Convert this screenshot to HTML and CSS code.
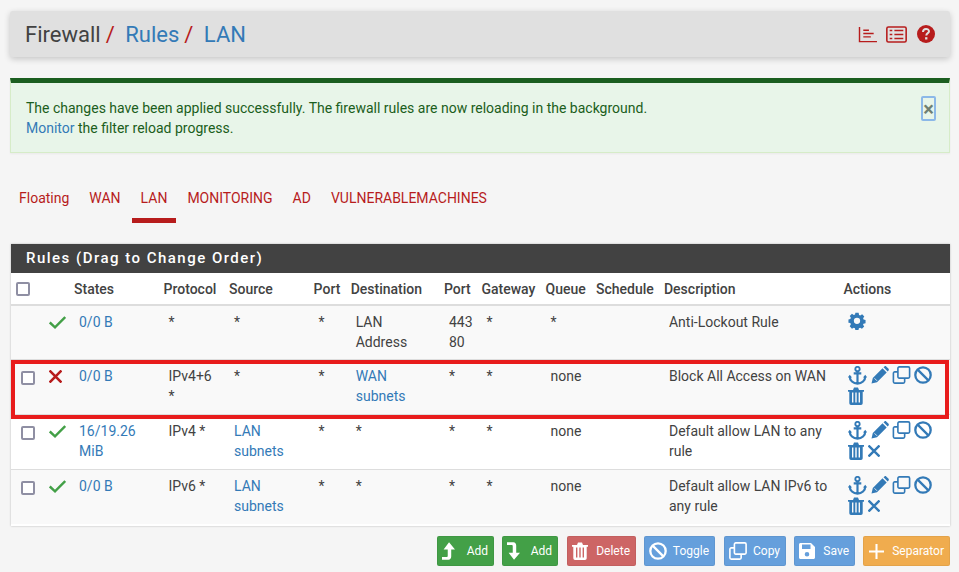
FILE: index.html
```html
<!DOCTYPE html>
<html lang="en">
<head>
  <meta charset="UTF-8">
  <title>Firewall: Rules: LAN</title>
  <link rel="stylesheet" href="styles.css">
</head>
<body>
<svg class="defs" width="0" height="0">
  <symbol id="i-check" viewBox="0 0 17 13"><path d="M.8 6.500 6 11.300 16.200 1" fill="none" stroke="currentColor" stroke-width="2.400"/></symbol>
  <symbol id="i-x" viewBox="1 1 12 12"><path d="M1.500 1.500 12.500 12.500M12.500 1.500 1.500 12.500" fill="none" stroke="currentColor" stroke-width="2.400"/></symbol>
  <symbol id="i-cog" viewBox="0 0 18 18"><path fill-rule="evenodd" fill="currentColor" d="M7.200.5h3.600l.5 2.400 1.300.6 2.100-1.300 2.400 2.500-1.300 2 .5 1.400 2.200.5v3.500l-2.300.5-.5 1.300 1.300 2-2.500 2.500-2-1.300-1.400.6-.5 2.200H7.200l-.5-2.300-1.300-.5-2 1.300L.9 15.400l1.300-2-.6-1.400L-.5 11.600V8l2.100-.5.600-1.400-1.300-2L3.400 1.600l2 1.300 1.400-.5zM9 6a3.500 3.500 0 1 0 0 7 3.500 3.500 0 0 0 0-7z" transform="translate(.9 .3) scale(.9)"/></symbol>
  <symbol id="i-anchor" viewBox="0 0 20 20"><circle cx="10" cy="3.200" r="2.300" fill="none" stroke="currentColor" stroke-width="2"/><path d="M6 7.800h8M10 5.400V18.500M1.800 10.800c0 4.500 3.600 7.700 8.200 7.700s8.200-3.200 8.200-7.700" fill="none" stroke="currentColor" stroke-width="2.300"/><path d="M0 12.200 1.800 9.200 4.300 12.200zM20 12.200 18.200 9.200 15.700 12.200z" fill="currentColor"/></symbol>
  <symbol id="i-pencil" viewBox="0 0 18 18"><path fill="currentColor" d="M.5 17.500 1.800 12 11.500 2.300l4.200 4.200L6 16.200zM12.500 1.300 13.500.4c.5-.4 1.200-.4 1.700 0l2.400 2.400c.4.500.4 1.200 0 1.700l-.9 1z"/><path d="M3.500 12.300 6 14.800" stroke="#fff" stroke-width=".8"/></symbol>
  <symbol id="i-clone" viewBox="0 0 20 20"><path fill="none" stroke="currentColor" stroke-width="1.800" d="M7.500 1h10c.8 0 1.500.7 1.500 1.500v9.500c0 .8-.7 1.500-1.500 1.500h-10C6.700 13.500 6 12.800 6 12V2.500C6 1.700 6.700 1 7.500 1z"/><path fill="none" stroke="currentColor" stroke-width="1.800" d="M6 6.500H2.500C1.700 6.500 1 7.200 1 8v9.500c0 .8.7 1.500 1.500 1.500h9.500c.8 0 1.500-.7 1.500-1.500V13.500"/></symbol>
  <symbol id="i-ban" viewBox="0 0 18 18"><circle cx="9" cy="9" r="7.700" fill="none" stroke="currentColor" stroke-width="2.300"/><path d="M3.600 3.600 14.400 14.400" stroke="currentColor" stroke-width="2.300"/></symbol>
  <symbol id="i-trash" viewBox="0 0 16 18"><path fill="currentColor" fill-rule="evenodd" d="M0 3h5l1-2.500h4L11 3h5v1.800h-1.300V16c0 1-.7 2-1.700 2H3c-1 0-1.700-1-1.700-2V4.800H0zM4 5.500v10h1.400v-10zM7.300 5.500v10h1.400v-10zM10.600 5.500v10H12v-10z"/></symbol>
  <symbol id="i-chart" viewBox="0 0 20 18"><path d="M1 1V16.500H19.500M5 4.500H11M5 8H16M5 11.500H13" fill="none" stroke="currentColor" stroke-width="1.500"/></symbol>
  <symbol id="i-list" viewBox="0 0 20 16"><rect x=".8" y=".8" width="18.400" height="14.400" rx="1.500" fill="none" stroke="currentColor" stroke-width="1.500"/><path d="M3.500 4.200H6M8 4.200H16.500M3.500 8H6M8 8H16.500M3.500 11.800H6M8 11.800H16.500" stroke="currentColor" stroke-width="1.600"/></symbol>
  <symbol id="i-help" viewBox="0 0 18 18"><circle cx="9" cy="9" r="9" fill="currentColor"/><path d="M6 7c0-4 6-4 6-.7C12 8.300 9.300 8 9.300 10.500" fill="none" stroke="#e0e0e0" stroke-width="2"/><rect x="8.100" y="12.200" width="2.300" height="2.300" fill="#e0e0e0"/></symbol>
  <symbol id="i-up" viewBox="0 0 12 16"><path fill="currentColor" d="M6.500 0 12 6.500H8.500V13c0 1.500-1 3-2.500 3H0v-2.500h4.500c.5 0 .8-.3.8-.8V6.500H1.500z"/></symbol>
  <symbol id="i-down" viewBox="0 0 12 16"><path fill="currentColor" d="M6.500 16 12 9.500H8.500V3C8.500 1.500 7.500 0 6 0H0v2.500h4.500c.5 0 .8.300.8.800v6.200H1.500z"/></symbol>
  <symbol id="i-save" viewBox="0 0 16 16"><path fill="currentColor" fill-rule="evenodd" d="M1.500 0H12l4 4v10.500c0 .8-.7 1.500-1.500 1.500h-13C.7 16 0 15.300 0 14.500v-13C0 .7.700 0 1.500 0zM3 1.500V6h8.500V1.500zM8 9a2.300 2.300 0 1 0 0 4.600A2.300 2.300 0 0 0 8 9z"/></symbol>
  <symbol id="i-plus" viewBox="0 0 16 16"><path d="M8 0V16M0 8H16" stroke="currentColor" stroke-width="2.200"/></symbol>
</svg>

<header class="page-header">
  <h1><span>Firewall</span><i>/</i><a href="#">Rules</a><i>/</i><a href="#">LAN</a></h1>
  <div class="header-icons">
    <svg class="hi-chart"><use href="#i-chart"/></svg>
    <svg class="hi-list"><use href="#i-list"/></svg>
    <svg class="hi-help"><use href="#i-help"/></svg>
  </div>
</header>

<div class="alert">
  <p>The changes have been applied successfully. The firewall rules are now reloading in the background.<br>
  <a href="#">Monitor</a> the filter reload progress.</p>
  <button class="close">&times;</button>
</div>

<ul class="tabs">
  <li><a href="#">Floating</a></li>
  <li><a href="#">WAN</a></li>
  <li class="active"><a href="#">LAN</a></li>
  <li><a href="#">MONITORING</a></li>
  <li><a href="#">AD</a></li>
  <li><a href="#">VULNERABLEMACHINES</a></li>
</ul>

<section class="panel">
  <h2>Rules (Drag to Change Order)</h2>
  <div class="panel-body">
    <table>
      <colgroup>
        <col class="c-check"><col class="c-status"><col class="c-states"><col class="c-proto"><col class="c-source">
        <col class="c-port"><col class="c-dest"><col class="c-dport"><col class="c-gw"><col class="c-queue">
        <col class="c-sched"><col class="c-desc"><col class="c-actions">
      </colgroup>
      <thead>
        <tr>
          <th><span class="box"></span></th><th></th><th>States</th><th>Protocol</th><th>Source</th><th>Port</th>
          <th>Destination</th><th>Port</th><th>Gateway</th><th>Queue</th><th>Schedule</th><th>Description</th><th>Actions</th>
        </tr>
      </thead>
      <tbody>
        <tr class="odd first">
          <td></td>
          <td><svg class="st st-ok"><use href="#i-check"/></svg></td>
          <td><a href="#">0/0 B</a></td>
          <td>*</td><td>*</td><td>*</td>
          <td>LAN<br>Address</td>
          <td>443<br>80</td>
          <td>*</td><td>*</td><td></td>
          <td>Anti-Lockout Rule</td>
          <td class="acts"><svg class="a-cog"><use href="#i-cog"/></svg></td>
        </tr>
        <tr class="odd">
          <td><span class="box"></span></td>
          <td><svg class="st st-no"><use href="#i-x"/></svg></td>
          <td><a href="#">0/0 B</a></td>
          <td>IPv4+6<br>*</td><td>*</td><td>*</td>
          <td><a href="#">WAN<br>subnets</a></td>
          <td>*</td><td>*</td><td>none</td><td></td>
          <td>Block All Access on WAN</td>
          <td class="acts">
            <svg class="a-anchor"><use href="#i-anchor"/></svg><svg class="a-pencil"><use href="#i-pencil"/></svg><svg class="a-clone"><use href="#i-clone"/></svg><svg class="a-ban"><use href="#i-ban"/></svg><svg class="a-trash"><use href="#i-trash"/></svg>
          </td>
        </tr>
        <tr>
          <td><span class="box"></span></td>
          <td><svg class="st st-ok"><use href="#i-check"/></svg></td>
          <td><a href="#">16/19.26<br>MiB</a></td>
          <td>IPv4 *</td>
          <td><a href="#">LAN<br>subnets</a></td>
          <td>*</td><td>*</td><td>*</td><td>*</td><td>none</td><td></td>
          <td>Default allow LAN to any<br>rule</td>
          <td class="acts">
            <svg class="a-anchor"><use href="#i-anchor"/></svg><svg class="a-pencil"><use href="#i-pencil"/></svg><svg class="a-clone"><use href="#i-clone"/></svg><svg class="a-ban"><use href="#i-ban"/></svg><svg class="a-trash"><use href="#i-trash"/></svg><svg class="a-x"><use href="#i-x"/></svg>
          </td>
        </tr>
        <tr class="odd">
          <td><span class="box"></span></td>
          <td><svg class="st st-ok"><use href="#i-check"/></svg></td>
          <td><a href="#">0/0 B</a></td>
          <td>IPv6 *</td>
          <td><a href="#">LAN<br>subnets</a></td>
          <td>*</td><td>*</td><td>*</td><td>*</td><td>none</td><td></td>
          <td>Default allow LAN IPv6 to<br>any rule</td>
          <td class="acts">
            <svg class="a-anchor"><use href="#i-anchor"/></svg><svg class="a-pencil"><use href="#i-pencil"/></svg><svg class="a-clone"><use href="#i-clone"/></svg><svg class="a-ban"><use href="#i-ban"/></svg><svg class="a-trash"><use href="#i-trash"/></svg><svg class="a-x"><use href="#i-x"/></svg>
          </td>
        </tr>
      </tbody>
    </table>
    <div class="flagged"></div>
  </div>
</section>

<div class="buttons">
  <a class="btn green w-add" href="#"><svg class="b-arrow"><use href="#i-up"/></svg>Add</a>
  <a class="btn green w-add2" href="#"><svg class="b-arrow"><use href="#i-down"/></svg>Add</a>
  <a class="btn red w-del" href="#"><svg class="b-trash"><use href="#i-trash"/></svg>Delete</a>
  <a class="btn blue w-tog" href="#"><svg class="b-icon"><use href="#i-ban"/></svg>Toggle</a>
  <a class="btn blue w-copy" href="#"><svg class="b-icon"><use href="#i-clone"/></svg>Copy</a>
  <a class="btn blue w-save" href="#"><svg class="b-save"><use href="#i-save"/></svg>Save</a>
  <a class="btn orange w-sep" href="#"><svg class="b-plus"><use href="#i-plus"/></svg>Separator</a>
</div>
</body>
</html>
```

FILE: styles.css
```css
* {
  box-sizing: border-box;
}

body {
  margin: 0;
  padding: 11px 9px 0 10px;
  background-color: #f5f5f5;
  color: #424242;
  font-family: Roboto, sans-serif;
  font-size: 14px;
  line-height: 20px;
  overflow: hidden;
}

a {
  color: #337ab7;
  text-decoration: none;
}

.defs {
  position: absolute;
}

/* page header */
.page-header {
  height: 46px;
  display: flex;
  align-items: center;
  justify-content: space-between;
  padding: 0 15px;
  background-color: #e0e0e0;
  border-radius: 3px;
  box-shadow: 0 2px 6px rgba(0, 0, 0, 0.2);
}

.page-header h1 {
  margin: 2px 0 0;
  font-size: 22px;
  font-weight: 400;
  line-height: 24px;
}

.page-header h1 i {
  margin: 0 10.5px 0 5px;
  font-style: normal;
  color: #b71c1c;
}

.header-icons {
  display: flex;
  align-items: center;
  color: #b71c1c;
}

.hi-chart {
  width: 20px;
  height: 17px;
  margin-right: 8px;
}

.hi-list {
  width: 21px;
  height: 17px;
  margin-right: 10px;
}

.hi-help {
  width: 18px;
  height: 18px;
}

/* alert */
.alert {
  height: 75px;
  margin-top: 21px;
  padding: 15px 15px 0;
  position: relative;
  background-color: #e8f5e9;
  border: 1px solid #d6ecc8;
  border-top: 5px solid #1b5e20;
  color: #1b5e20;
  box-shadow: 0 1px 2px rgba(0, 0, 0, 0.05);
}

.alert p {
  margin: 0;
}

.close {
  position: absolute;
  top: 13px;
  right: 13px;
  width: 15px;
  height: 25px;
  padding: 0;
  background: none;
  border: 2px solid #8cb8e8;
  border-radius: 2px;
  color: #6f7f72;
  font-family: Roboto, sans-serif;
  font-size: 20px;
  font-weight: 700;
  line-height: 20px;
}

/* tabs */
.tabs {
  display: flex;
  margin: 25px 0 21px;
  padding: 0;
  list-style: none;
}

.tabs li {
  height: 45px;
  padding: 10px 9px 0;
  margin-right: 2px;
}

.tabs a {
  color: #b71c1c;
}

.tabs .active {
  border-bottom: 5px solid #b71c1c;
}

/* rules panel */
.panel {
  height: 282px;
  background-color: #fff;
  margin-left: 1px;
  box-shadow: 0 0 2px rgba(0, 0, 0, 0.25);
}

.panel h2 {
  height: 29px;
  margin: 0;
  padding: 4px 15px 0;
  background-color: #424242;
  color: #fff;
  font-size: 15px;
  font-weight: 500;
  line-height: 20px;
  letter-spacing: 1.48px;
}

.panel-body {
  position: relative;
}

table {
  width: 939px;
  table-layout: fixed;
  border-collapse: collapse;
}

.c-check { width: 28px; }
.c-status { width: 30px; }
.c-states { width: 89.5px; }
.c-proto { width: 65.5px; }
.c-source { width: 84.6px; }
.c-port { width: 37.1px; }
.c-dest { width: 93.3px; }
.c-dport { width: 37.5px; }
.c-gw { width: 64px; }
.c-queue { width: 50.5px; }
.c-sched { width: 68px; }
.c-desc { width: 179.5px; }
.c-actions { width: 111.5px; }

th {
  height: 32px;
  padding: 0 0 0 5px;
  text-align: left;
  font-weight: 500;
  color: #424242;
  border-bottom: 2px solid #ddd;
  white-space: nowrap;
}

td {
  height: 54px;
  padding: 6px 0 7px 10px;
  vertical-align: top;
  border-bottom: 1px solid #ddd;
  white-space: nowrap;
}

.first td {
  height: 53px;
}

.odd td {
  background-color: #f9f9f9;
}

tbody tr:last-child td {
  border-bottom: none;
}

.box {
  display: block;
  width: 14px;
  height: 14px;
  margin-top: 5px;
  background-color: #fff;
  border: 2px solid #8f8fa3;
  border-radius: 2px;
}

th .box {
  margin-top: 0;
}

.st {
  display: block;
  margin-top: 4px;
}

.st-ok {
  width: 17px;
  height: 13px;
  color: #43a047;
}

.st-no {
  width: 13px;
  height: 13px;
  color: #b71c1c;
}

/* action icons */
.acts {
  color: #337ab7;
  white-space: normal;
  line-height: 0;
  padding-right: 12px;
}

.acts svg {
  display: inline-block;
  margin-right: 3px;
  margin-bottom: 2px;
  vertical-align: top;
}

.a-cog { width: 18px; height: 18px; }
.acts .a-anchor { width: 19px; height: 19px; margin-right: 4px; }
.a-pencil { width: 18px; height: 18px; }
.a-clone { width: 19px; height: 18px; }
.a-ban { width: 18px; height: 18px; }
.acts .a-trash { width: 16px; height: 18px; margin-right: 4px; }
.acts .a-x { width: 12px; height: 12px; margin: 3px 0 0 0; }

.flagged {
  position: absolute;
  top: 87px;
  left: 0;
  width: 938px;
  height: 59px;
  border: 4px solid #e81c1c;
  pointer-events: none;
}

/* bottom buttons */
.buttons {
  display: flex;
  justify-content: flex-end;
  gap: 8px;
  margin-top: 10px;
}

.btn {
  display: flex;
  align-items: center;
  justify-content: space-between;
  height: 30px;
  padding: 0 5px 0 4px;
  border-radius: 2px;
  border: 1px solid rgba(0, 0, 0, 0.05);
  color: #fff;
  font-size: 12px;
}

.green { background-color: #43a047; }
.red { background-color: #cd6565; }
.blue { background-color: #659fdc; }
.orange { background-color: #f0ac4e; }

.w-add { width: 57px; }
.w-add2 { width: 56px; }
.w-del { width: 69px; margin-left: 1px; }
.w-tog { width: 71px; }
.w-copy { width: 62px; margin-left: 1px; }
.w-save { width: 61px; }
.w-sep { width: 87px; }

.b-arrow { width: 13px; height: 18px; }
.b-trash { width: 16px; height: 18px; }
.b-icon { width: 18px; height: 18px; }
.b-save { width: 16px; height: 16px; }
.b-plus { width: 15px; height: 15px; margin-left: 1px; }
```
